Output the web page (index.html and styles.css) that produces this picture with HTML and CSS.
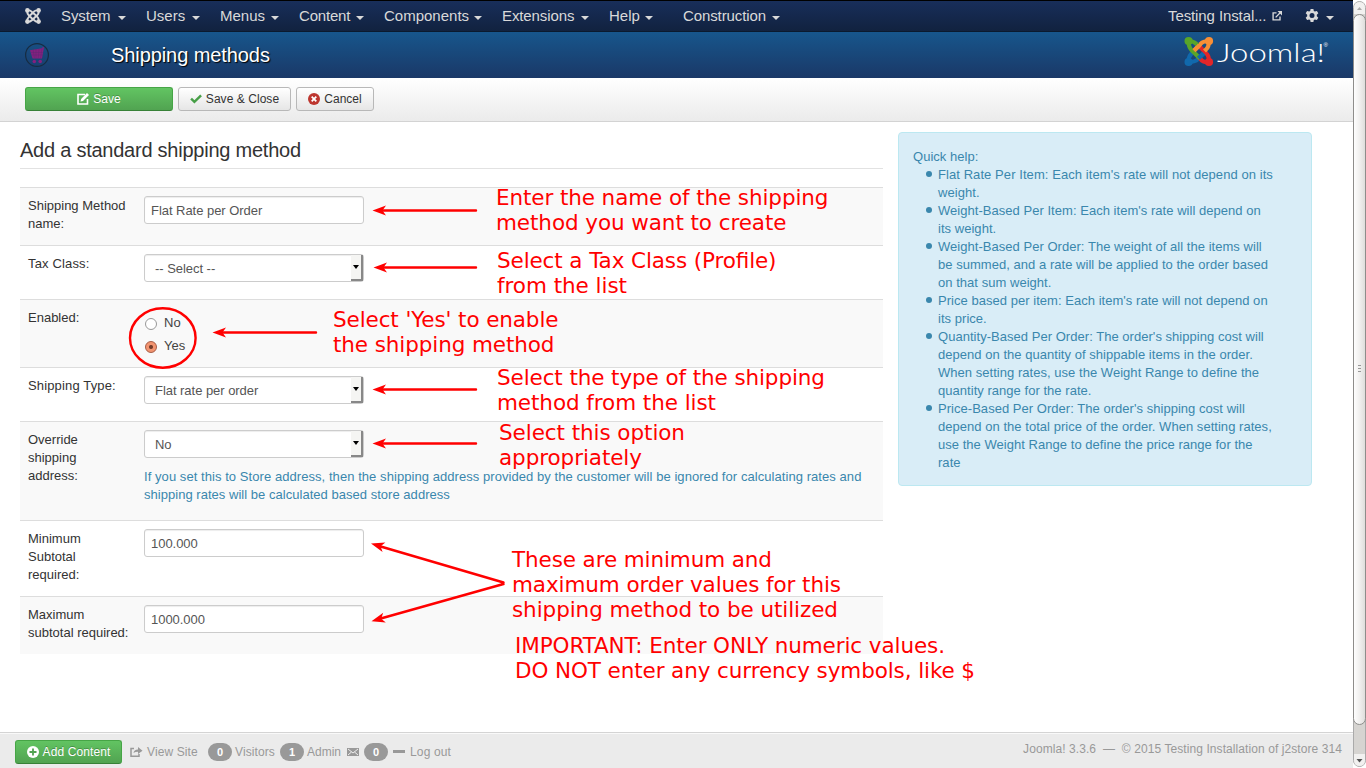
FILE: index.html
```html
<!DOCTYPE html>
<html lang="en">
<head>
<meta charset="utf-8">
<title>Shipping methods</title>
<link rel="stylesheet" href="styles.css">
</head>
<body>
<div class="window">
<div class="page">
  <nav class="navbar">
    <svg class="brand" width="16" height="16" viewBox="0 0 30 30"><g fill="none" stroke="#d9d9d9" stroke-width="3.600"><path d="M4 5Q4 11 7 13.500l9 9M5 4q5 0 7.500 3l2 2M26 4q-7 0-9.500 3L8 15.500M26 5q0 6-3 8.500l-2 2M26 25q0-6-3-8.500L14 8M26 26q-6 0-8.500-3l-2-2M4 26q6 0 9-3l9-9M4 25q0-5 3-8l2-2"/></g><g fill="#d9d9d9"><circle cx="4.500" cy="4.500" r="4.300"/><circle cx="25.500" cy="4.500" r="4.300"/><circle cx="4.500" cy="25.500" r="4.300"/><circle cx="25.500" cy="25.500" r="4.300"/></g></svg>
    <ul class="menu">
      <li class="m-system">System<i class="caret"></i></li>
      <li class="m-users">Users<i class="caret"></i></li>
      <li class="m-menus">Menus<i class="caret"></i></li>
      <li class="m-content">Content<i class="caret"></i></li>
      <li class="m-components">Components<i class="caret"></i></li>
      <li class="m-extensions">Extensions<i class="caret"></i></li>
      <li class="m-help">Help<i class="caret"></i></li>
      <li class="m-construction">Construction<i class="caret"></i></li>
    </ul>
    <div class="site"><span>Testing Instal...</span>
      <svg class="ext" width="10" height="10" viewBox="0 0 11 11"><path d="M5 2H1.200v7.800h7.600V6M4 7l5-5" fill="none" stroke="#d9d9d9" stroke-width="1.500"/><path d="M6 0h5v5z" fill="#d9d9d9"/></svg>
      <svg class="gear" width="14" height="14" viewBox="0 0 14 14"><path fill="#d9d9d9" fill-rule="evenodd" d="M5.600 0h2.800l.4 2 1.100.6 2-.7 1.400 2.400L11.800 5.700v1.600l1.500 1.400-1.400 2.400-2-.7-1.100.6-.4 2H5.600l-.4-2-1.100-.6-2 .7L.7 8.700l1.500-1.400V5.700L.7 4.300l1.400-2.400 2 .7L5.200 2zM7 4a2.500 2.500 0 1 0 0 5 2.500 2.500 0 0 0 0-5z"/></svg>
      <i class="caret"></i></div>
  </nav>
  <header class="header">
    <svg class="cart" width="24" height="24" viewBox="0 0 24 24"><circle cx="12" cy="12" r="11.400" fill="none" stroke="#172c42" stroke-width="1.200"/><path d="M5 7.300l12-2 .8-1.300 1.200.3L17 15.500H7.500z" fill="#85207f"/><path d="M6 9.500h12M6.500 12h11M8 6.500l1.500 9M11 6v10M14 6l-.8 10M17 5.500l-1.500 10" stroke="#5f2875" stroke-width=".5"/><circle cx="9.300" cy="18.500" r="1.800" fill="#85207f"/><circle cx="15.200" cy="18.500" r="1.800" fill="#85207f"/></svg>
    <h1>Shipping methods</h1>
    <svg class="logo" width="146" height="34" viewBox="0 0 146 34">
      <g fill="none" stroke-width="4.200">
        <path d="M4.500 26q7 0 9.500-3l8.500-8.500M4.500 25.500q0-5 3-8l2-2" stroke="#1169ad"/>
        <path d="M25 25.500q0-6-3-8.500L14 9M25 26.500q-6 0-8.500-3.500l-2-2" stroke="#e32629"/>
        <path d="M25 5q-6 0-8.500 3L8 16.500M25 5q0 6-3 8.500l-1.500 1.500" stroke="#f98f35"/>
        <path d="M4.500 5q0 6 3 9l8.500 8.500M4.500 5q5 0 8 3l1 1" stroke="#59a528"/>
        <path d="M15.500 9.300L10 14.800" stroke="#f98f35"/><path d="M14.500 22.300L19.500 17.300" stroke="#1169ad"/>
      </g>
      <circle cx="4.600" cy="5" r="4.100" fill="#59a528"/><circle cx="25" cy="5" r="4.100" fill="#f98f35"/><circle cx="4.600" cy="26" r="4.100" fill="#1169ad"/><circle cx="25" cy="26" r="4.100" fill="#e32629"/>
      <text class="wordmark" x="33" y="26" textLength="108" lengthAdjust="spacingAndGlyphs">Joomla!</text>
      <text class="reg" x="139.500" y="10.500">®</text>
    </svg>
  </header>
  <div class="toolbar">
    <button class="btn success save"><svg width="12" height="12" viewBox="0 0 12 12"><path d="M8 1.500H1v9.500h9.500V6" fill="none" stroke="#fff" stroke-width="1.600"/><path d="M3.500 8.500l.6-2.500L10 0l2 2-6 5.900z" fill="#fff"/></svg><span>Save</span></button>
    <button class="btn close"><svg width="12" height="10" viewBox="0 0 13 10"><path d="M1.200 4.500l3.600 3.600L12 1" fill="none" stroke="#479f47" stroke-width="2.600"/></svg><span>Save &amp; Close</span></button>
    <button class="btn cancel"><svg width="12" height="12" viewBox="0 0 12 12"><circle cx="6" cy="6" r="6" fill="#bd362f"/><path d="M3.700 3.700l4.600 4.600M8.300 3.700L3.700 8.300" stroke="#fff" stroke-width="1.800"/></svg><span>Cancel</span></button>
  </div>
  <main class="main">
    <section class="form">
      <h2><span>Add a standard shipping method</span></h2>
      <div class="row r1"><label>Shipping Method<br>name:</label><div class="field input">Flat Rate per Order</div></div>
      <div class="row r2"><label>Tax Class:</label><div class="field select">-- Select --<b></b></div></div>
      <div class="row r3"><label>Enabled:</label><div class="radios"><p><i></i>No</p><p><i class="on"></i>Yes</p></div></div>
      <div class="row r4"><label>Shipping Type:</label><div class="field select">Flat rate per order<b></b></div></div>
      <div class="row r5"><label>Override<br>shipping<br>address:</label><div><div class="field select">No<b></b></div><p class="hint">If you set this to Store address, then the shipping address provided by the customer will be ignored for calculating rates and<br><span class="hint-end">shipping rates will be calculated based store address</span></p></div></div>
      <div class="row r6"><label>Minimum<br>Subtotal<br>required:</label><div class="field input">100.000</div></div>
      <div class="row r7"><label>Maximum<br>subtotal required:</label><div class="field input">1000.000</div></div>
    </section>
    <aside class="help">Quick help:
      <ul>
        <li class="first">Flat Rate Per Item: Each item's rate will not depend on its<br>weight.</li>
        <li>Weight-Based Per Item: Each item's rate will depend on<br>its weight.</li>
        <li>Weight-Based Per Order: The weight of all the items will<br>be summed, and a rate will be applied to the order based<br>on that sum weight.</li>
        <li>Price based per item: Each item's rate will not depend on<br>its price.</li>
        <li>Quantity-Based Per Order: The order's shipping cost will<br>depend on the quantity of shippable items in the order.<br>When setting rates, use the Weight Range to define the<br>quantity range for the rate.</li>
        <li>Price-Based Per Order: The order's shipping cost will<br>depend on the total price of the order. When setting rates,<br>use the Weight Range to define the price range for the<br>rate</li>
      </ul>
    </aside>
  </main>
  <footer class="status">
    <button class="btn success add"><svg width="12" height="12" viewBox="0 0 12 12"><circle cx="6" cy="6" r="6" fill="#fff"/><path d="M6 2.500v7M2.500 6h7" stroke="#51a351" stroke-width="1.800"/></svg><span>Add Content</span></button>
    <svg class="s-share" width="13" height="10" viewBox="0 0 13 10"><path d="M4 1.500H1v7.700h8V7" fill="none" stroke="#999" stroke-width="1.500"/><path d="M3.500 6Q4 2.500 8 2.500V0l4.500 3.700L8 7V4.800Q5 4.800 3.500 6z" fill="#999"/></svg>
    <span class="s-view">View Site</span><em>0</em><span class="s-vis">Visitors</span><em>1</em><span class="s-adm">Admin</span>
    <svg class="s-mail" width="12" height="8" viewBox="0 0 12 8"><path d="M0 0h12v8H0z" fill="#999"/><path d="M1 1l5 4 5-4M1 7l3.500-3M11 7L7.500 4" fill="none" stroke="#eee"/></svg>
    <em class="s-zero">0</em><i class="dash"></i><span class="s-out">Log out</span>
    <span class="copy">Joomla! 3.3.6 &nbsp;—&nbsp; © 2015 Testing Installation of j2store 314</span>
  </footer>
</div>
<div class="scroll"><svg width="13" height="768" viewBox="0 0 13 768">
  <defs><linearGradient id="thumb"><stop offset="0" stop-color="#fff"/><stop offset=".5" stop-color="#f1f0ef"/><stop offset="1" stop-color="#dddcda"/></linearGradient></defs>
  <path d="M0 0h13v768H0z" fill="#fff"/><rect x=".5" y="1.500" width="12" height="765" rx="6" fill="#d6d4d1" stroke="#aaa"/>
  <path d="M1 14V8q0-6 5.500-6T12 8v6z" fill="#f2f1f0"/><path d="M1 754v6q0 6 5.500 6t5.500-6v-6z" fill="#f2f1f0"/>
  <rect x=".5" y="14.500" width="12" height="710" rx="6" fill="url(#thumb)" stroke="#8e8d8b"/>
  <path d="M4 10l2.500-3L9 10z" fill="#aaa"/><path d="M3.500 759h6l-3 3.500z" fill="#555"/>
  <path d="M5 365.500h3M5 368.500h3M5 371.500h3" stroke="#999"/></svg></div>
<svg class="notes" width="1366" height="768" viewBox="0 0 1366 768">
  <defs><g id="head"><path d="M0 0l13.500-5-3.500 5 3.500 5z"/></g></defs>
  <g stroke="#f00" stroke-width="2.400" fill="none" stroke-linecap="round">
    <ellipse cx="162.800" cy="338" rx="32.800" ry="29.700"/>
    <path d="M381 210.500h95M381 267.500h95M221 332.500h95M381 389.500h95M381 443.500h95M379 546l124.500 36.500M379 619l124.500-35"/>
  </g>
  <g fill="#f00">
    <use href="#head" x="372.500" y="210.500"/><use href="#head" x="373.500" y="267.500"/><use href="#head" x="212.500" y="332.500"/><use href="#head" x="372.500" y="389.500"/><use href="#head" x="372.500" y="443.500"/>
    <use href="#head" transform="translate(371 543.500) rotate(16.300)"/><use href="#head" transform="translate(371.500 621.300) rotate(-15.500)"/>
  </g>
  <g class="note">
    <text x="496" y="205" textLength="332.500">Enter the name of the shipping</text><text x="496" y="230" textLength="290.500">method you want to create</text>
    <text x="497" y="268" textLength="279.500">Select a Tax Class (Profile)</text><text x="497" y="293" textLength="130">from the list</text>
    <text x="333" y="327" textLength="225.500">Select 'Yes' to enable</text><text x="333" y="352" textLength="221.500">the shipping method</text>
    <text x="497" y="385" textLength="328">Select the type of the shipping</text><text x="497" y="410" textLength="219">method from the list</text>
    <text x="499" y="440" textLength="186">Select this option</text><text x="499" y="465" textLength="143">appropriately</text>
    <text x="512" y="567" textLength="260">These are minimum and</text><text x="512" y="592" textLength="329">maximum order values for this</text><text x="512" y="617" textLength="326">shipping method to be utilized</text>
    <text x="515" y="653" textLength="430">IMPORTANT: Enter ONLY numeric values.</text><text x="515" y="678" textLength="460">DO NOT enter any currency symbols, like $</text>
  </g>
</svg>
</div>
</body>
</html>
```

FILE: styles.css
```css
* { box-sizing: border-box; }
body { margin: 0; overflow: hidden; font: 13px/18px "Liberation Sans", Arial, sans-serif; color: #333; background: #fff; }
h1, h2, p, ul { margin: 0; padding: 0; font-weight: normal; }
svg { display: block; flex: none; }
.window { position: relative; display: flex; width: 1366px; height: 768px; border-top: 1px solid #000; }
.page { width: 1353px; height: 767px; display: flex; flex-direction: column; }
.scroll { width: 13px; margin-top: -1px; height: 768px; }
.notes { position: absolute; left: 0; top: -1px; pointer-events: none; }
.note { fill: #f00; font: 21.5px "DejaVu Sans", sans-serif; }

.navbar { display: flex; height: 31px; padding-left: 25px; align-items: center; background: linear-gradient(#182e5a, #11223f); border-bottom: 1px solid #0b1a2e; color: #d9d9d9; font-size: 15px; line-height: 30px; white-space: nowrap; }
.menu { display: flex; list-style: none; margin-left: 20px; }
.menu li { display: flex; align-items: center; justify-content: space-between; }
.m-system { width: 65px; margin-right: 20px; letter-spacing: -.1px; }
.m-users { width: 54px; margin-right: 20px; }
.m-menus { width: 59px; margin-right: 20px; }
.m-content { width: 65px; margin-right: 20px; letter-spacing: -.2px; }
.m-components { width: 98px; margin-right: 20px; }
.m-extensions { width: 87px; margin-right: 20px; letter-spacing: -.1px; }
.m-help { width: 44px; margin-right: 30px; }
.m-construction { width: 97px; letter-spacing: -.1px; }
.caret { flex: none; width: 0; height: 0; border: 4px solid transparent; border-top-color: #d9d9d9; border-bottom: 0; margin-top: 3px; }
.site { margin-left: auto; display: flex; align-items: center; width: 185px; }
.site span { width: 99px; letter-spacing: -.1px; }
.ext { margin-left: 5px; }
.gear { margin: 0 7px 0 23px; }

.header { display: flex; align-items: center; height: 46px; padding-left: 25px; background: linear-gradient(#17568c, #1a3867); }
.header h1 { margin-left: 62px; font-size: 20px; letter-spacing: -.08px; line-height: 46px; color: #fff; text-shadow: 1px 1px 1px #000; }
.logo { margin-left: auto; margin-right: 23px; margin-top: -5px; }
.wordmark { font: 300 25px Lato, sans-serif; fill: #fff; }
.reg { font: 6px "Liberation Sans", sans-serif; fill: #fff; }

.toolbar { display: flex; gap: 5px; height: 44px; padding: 9px 25px; background: linear-gradient(#fff, #ebebeb); border-bottom: 1px solid #d3d3d3; }
.btn { display: flex; align-items: center; justify-content: center; gap: 4px; height: 24px; padding: 0; border: 1px solid #b8b8b8; border-radius: 3px; background: linear-gradient(#fff, #e6e6e6); color: #333; font: 12px/18px "Liberation Sans", Arial, sans-serif; white-space: nowrap; }
.success { border-color: #46a546 #46a546 #378137; background: linear-gradient(#62c462, #51a351); color: #fff; text-shadow: 0 -1px 0 rgba(0,0,0,.25); }
.save { width: 148px; }
.close { width: 113px; letter-spacing: .05px; }
.cancel { width: 78px; }

.main { display: flex; align-items: flex-start; gap: 15px; padding: 10px 0 0 20px; flex: 1; }
.form { width: 863px; }
.form h2 { height: 37px; margin-bottom: 18px; font-size: 20px; letter-spacing: -.24px; line-height: 36px; border-bottom: 1px solid #e2e2e2; }
.row { display: flex; padding: 8px; border-top: 1px solid #ddd; }
.row:nth-of-type(odd) { background: #f9f9f9; }
.row label { width: 116px; padding-top: 1px; white-space: nowrap; }
.r1 { height: 58px; } .r2 { height: 54px; } .r3 { height: 68px; } .r4 { height: 54px; } .r5 { height: 99px; } .r6 { height: 76px; } .r7 { height: 58px; }
.r2 label, .r4 label { letter-spacing: .15px; }
.field { width: 220px; height: 28px; padding: 2px 6px 0; line-height: 24px; letter-spacing: -.04px; border: 1px solid #ccc; border-radius: 3px; background: #fff; color: #555; box-shadow: inset 0 1px 1px rgba(0,0,0,.075); }
.select { display: flex; justify-content: space-between; padding: 0 0 0 10px; line-height: 28px; }
.select b { width: 12px; height: 26px; background: #f5f5f3; border-right: 2px solid #888; border-bottom: 2px solid #888; display: flex; align-items: center; justify-content: center; }
.select b::after { content: ""; border: 3.5px solid transparent; border-top: 4px solid #000; border-bottom: 0; }
.hint { margin-top: 10px; color: #3a87ad; white-space: nowrap; letter-spacing: .062px; }
.hint-end { letter-spacing: .03px; }
.radios p { display: flex; height: 23px; padding-top: 6px; color: #444; }
.radios i { width: 12px; height: 12px; margin: 4px 7px 0 1px; border: 1px solid #999; border-radius: 50%; background: #fff; }
.radios .on { border-color: #a75b43; background: radial-gradient(circle, #733b29 1.5px, #f29470 2.5px); }
.help { width: 414px; height: 354px; padding: 15px 14px; border: 1px solid #bce8f1; border-radius: 4px; background: #d9edf7; color: #3a87ad; white-space: nowrap; letter-spacing: .035px; }
.help .first { letter-spacing: .075px; }
.help ul { list-style: none; padding-left: 25px; }
.help li { position: relative; }
.help li::before { content: ""; position: absolute; left: -12px; top: 5px; width: 6px; height: 6px; border-radius: 50%; background: #3a87ad; }

.status { display: flex; align-items: center; height: 36px; padding: 2px 11px 0 15px; border-top: 1px solid #d4d4d4; background: #ebebeb; color: #999; font-size: 12px; white-space: nowrap; box-shadow: inset 0 1px 0 #f9f9f9; }
.add { width: 107px; letter-spacing: .1px; }
.s-share { margin: 0 4px 0 8px; }
.s-view { width: 61px; letter-spacing: .1px; }
.status em { width: 24px; height: 18px; border-radius: 9px; background: #999; color: #fff; font: bold 11px/18px "Liberation Sans", sans-serif; text-align: center; }
.s-vis { margin-left: 3px; width: 45px; letter-spacing: .1px; }
.s-adm { margin-left: 3px; width: 40px; }
.status .s-zero { margin-left: 5px; }
.dash { width: 12px; height: 3px; margin: -1px 5px 0; background: #999; }
.s-out { letter-spacing: .15px; }
.copy { margin-left: auto; margin-top: -5px; letter-spacing: .08px; }
```
